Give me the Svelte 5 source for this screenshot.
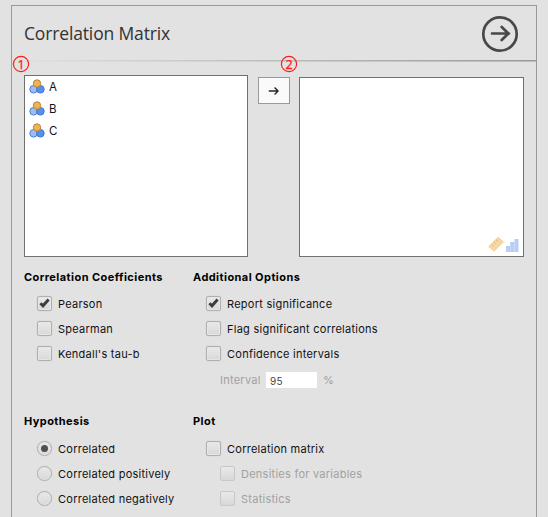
<script>
  const variables = ['A', 'B', 'C'];
  const coefficients = [
    { label: 'Pearson', checked: true },
    { label: 'Spearman', checked: false },
    { label: "Kendall's tau-b", checked: false }
  ];
  const additional = [
    { label: 'Report significance', checked: true },
    { label: 'Flag significant correlations', checked: false },
    { label: 'Confidence intervals', checked: false }
  ];
  const hypotheses = [
    { label: 'Correlated', checked: true },
    { label: 'Correlated positively', checked: false },
    { label: 'Correlated negatively', checked: false }
  ];
  const plots = [
    { label: 'Correlation matrix' },
    { label: 'Densities for variables', sub: true },
    { label: 'Statistics', sub: true }
  ];
</script>

{#snippet checkRow(item)}
  <label class="row" class:sub={item.sub}>
    <span class="box">
      {#if item.checked}
        <svg width="13" height="13" viewBox="0 0 13 13"><path d="M2.4 6.3 5 8.8 10.6 2.5" fill="none" stroke="#3c3c3c" stroke-width="2.9" /></svg>
      {/if}
    </span>
    <span class="text">{item.label}</span>
  </label>
{/snippet}

<main class="page">
  <section class="panel">
    <header>
      <h1>Correlation Matrix</h1>
      <svg class="go" width="38" height="38" viewBox="0 0 38 38" fill="none" stroke="#484848">
        <circle cx="19" cy="19" r="16.7" stroke-width="2.7" />
        <path d="M11 18.5H28M20.7 12 27.4 18.5 20.7 25" stroke-width="2.7" stroke-linecap="round" stroke-linejoin="round" />
      </svg>
    </header>
    <div class="rule"></div>

    <div class="supplier">
      <div class="list source">
        {#each variables as name}
          <div class="variable">
            <svg width="16" height="16" viewBox="0 0 16 16">
              <circle cx="4.6" cy="10.3" r="3.8" fill="#9dbdf2" stroke="#4a7ed8" />
              <circle cx="11.4" cy="10.3" r="3.8" fill="#5b8fe6" stroke="#3f76d5" />
              <circle cx="8" cy="4.5" r="3.7" fill="#edb355" stroke="#ba8535" />
            </svg>
            <span>{name}</span>
          </div>
        {/each}
      </div>
      <button class="assign" aria-label="Assign">
        <svg width="12" height="10" viewBox="0 0 12 10" fill="none" stroke="#262626" stroke-width="1.4"><path d="M.8 5H10M6.6 1.6 10 5 6.6 8.4" /></svg>
      </button>
      <div class="list target">
        <svg width="32" height="17" viewBox="0 0 32 17">
          <path d="M.8 10.6 10 1.4 15.4 5.8 6.1 15.1Z" fill="#f4d7a5" stroke="#f0cd94" />
          <path d="m3.5 8.4 1.8 1.6M5.8 6l1.8 1.6M8 3.8 9.8 5.4" stroke="#dfb977" />
          <path d="M18 10h4v6h-4ZM22.2 6h4v10h-4ZM26.5 3h4v13h-4Z" fill="#b8cef5" />
        </svg>
      </div>
    </div>

    <div class="options">
      <div class="group">
        <h2>Correlation Coefficients</h2>
        {#each coefficients as item}{@render checkRow(item)}{/each}
      </div>
      <div class="group">
        <h2>Additional Options</h2>
        {#each additional as item}{@render checkRow(item)}{/each}
        <div class="interval">
          <span>Interval</span>
          <input value="95" aria-label="Interval" />
          <span>%</span>
        </div>
      </div>
    </div>
    <div class="options lower">
      <div class="group">
        <h2>Hypothesis</h2>
        {#each hypotheses as item}
          <label class="row">
            <span class="box round">{#if item.checked}<i></i>{/if}</span>
            <span class="text">{item.label}</span>
          </label>
        {/each}
      </div>
      <div class="group">
        <h2>Plot</h2>
        {#each plots as item}{@render checkRow(item)}{/each}
      </div>
    </div>
    <svg class="marker one" width="18" height="18" viewBox="0 0 18 18"><circle cx="9" cy="9" r="7.6" /><text x="9" y="13.5">1</text></svg>
    <svg class="marker two" width="18" height="18" viewBox="0 0 18 18"><circle cx="9" cy="9" r="7.6" /><text x="9" y="13.5">2</text></svg>
  </section>
</main>

<style>
  :global(body) { background: #e2e2e2; }
  .page {
    box-sizing: border-box;
    height: 517px;
    padding: 5px 11px 0;
    overflow: hidden;
    background: #e2e2e2;
    color: #111;
    font: 11px/15px Inter, sans-serif;
    letter-spacing: 0.25px;
  }
  .panel {
    position: relative;
    box-sizing: border-box;
    height: 520px;
    border: 1px solid #999;
  }
  header {
    display: flex;
    align-items: center;
    justify-content: space-between;
    box-sizing: border-box;
    height: 54px;
    padding: 2px 17px 0 12px;
  }
  h1 {
    margin: 0;
    padding-bottom: 2px;
    color: #333;
    font: 400 17.5px/26px 'Open Sans', sans-serif;
    letter-spacing: -0.15px;
  }
  .go { display: block; }
  .rule {
    height: 2px;
    background: linear-gradient(90deg, #99999900, #999);
    -webkit-mask-image: linear-gradient(#000 50%, #0008 50%);
    mask-image: linear-gradient(#000 50%, #0008 50%);
  }
  .supplier {
    display: flex;
    align-items: flex-start;
    height: 182px;
    padding: 13px 0 0 12px;
  }
  .list {
    box-sizing: border-box;
    border: 1px solid #707070;
    background: #fff;
  }
  .source { width: 224px; height: 182px; }
  .variable {
    display: flex;
    align-items: center;
    gap: 4px;
    height: 22px;
    padding-left: 4px;
    font-size: 11.5px;
    line-height: 14px;
    letter-spacing: 0;
  }
  .assign {
    display: flex;
    align-items: center;
    justify-content: center;
    box-sizing: border-box;
    width: 32px;
    height: 27px;
    margin: 2px 9px 0 10px;
    padding: 0;
    border: 1px solid #999;
    background: #fafafa;
  }
  .target {
    display: flex;
    align-items: flex-end;
    justify-content: flex-end;
    width: 225px;
    height: 180px;
    margin-top: 2px;
    padding: 0 3px 3px 0;
  }
  .options {
    display: grid;
    grid-template-columns: 169px 1fr;
    box-sizing: border-box;
    height: 145px;
    padding: 12px 0 0 12px;
  }
  .lower { padding-top: 11px; }
  .lower h2 { margin-bottom: 8px; }
  h2 {
    box-sizing: border-box;
    height: 15px;
    margin: 0 0 7px;
    padding-top: 1px;
    color: #000;
    font-size: 11px;
    font-weight: 700;
    line-height: 15px;
    letter-spacing: 0.43px;
  }
  .row {
    display: flex;
    align-items: center;
    gap: 6px;
    height: 25px;
    padding-left: 13px;
  }
  .text { padding-top: 2px; }
  .box {
    display: flex;
    align-items: center;
    justify-content: center;
    box-sizing: border-box;
    width: 15px;
    height: 15px;
    border: 1px solid #b0b0b0;
    border-radius: 2px;
    background: linear-gradient(#e9e9e9, #d8d8d8);
    box-shadow: inset 0 0 0 1px #e6e6e6, 0 0 1px #bbb;
  }
  .round { border-radius: 50%; }
  .round i { width: 7px; height: 7px; border-radius: 50%; background: #505050; }
  .sub { padding-left: 27px; color: #a1a1a1; }
  .sub .box { border-color: #c8c8c8; box-shadow: none; }
  .interval {
    display: flex;
    align-items: center;
    height: 28px;
    padding-left: 27px;
    color: #a1a1a1;
  }
  .interval span:first-child { width: 41px; }
  input {
    box-sizing: border-box;
    width: 51px;
    height: 16px;
    margin: 0 6px 0 5px;
    padding: 1px 4px 0;
    border: 0;
    background: #fff;
    color: #444;
    font: 10px Inter, sans-serif;
    letter-spacing: 0.3px;
  }
  .marker {
    position: absolute;
    top: 49px;
    fill: none;
    stroke: #ff1c1c;
    stroke-width: 1.2;
  }
  .marker text {
    fill: #ff1c1c;
    stroke: #ff1c1c;
    stroke-width: 0.25;
    font: 12.5px 'Noto Sans', sans-serif;
    letter-spacing: 0;
    text-anchor: middle;
  }
  .one { left: 0; }
  .two { left: 268px; }
</style>
